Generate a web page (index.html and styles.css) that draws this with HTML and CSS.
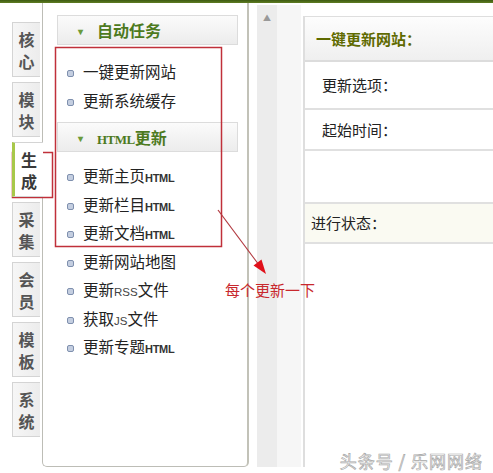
FILE: index.html
```html
<!DOCTYPE html>
<html lang="zh-CN">
<head>
    <meta charset="UTF-8">
    <meta name="viewport" content="width=device-width, initial-scale=1.0">
    <title>生成 - 一键更新网站</title>
    <link rel="stylesheet" href="styles.css">
</head>
<body>
    <div class="topbar"></div>

    <div class="frame">
        <!-- left tabs -->
        <div class="tabs">
            <div class="tab">核<br>心</div>
            <div class="tab">模<br>块</div>
            <div class="tab active">生<br>成</div>
            <div class="tab">采<br>集</div>
            <div class="tab">会<br>员</div>
            <div class="tab">模<br>板</div>
            <div class="tab">系<br>统</div>
        </div>

        <!-- menu -->
        <div class="menu">
            <div class="menu-head"><span class="caret">&#9662;</span>自动任务</div>
            <ul class="menu-list">
                <li><i class="dot"></i>一键更新网站</li>
                <li><i class="dot"></i>更新系统缓存</li>
            </ul>
            <div class="menu-head"><span class="caret">&#9662;</span><span class="en">HTML</span>更新</div>
            <ul class="menu-list second">
                <li><i class="dot"></i>更新主页<span class="en">HTML</span></li>
                <li><i class="dot"></i>更新栏目<span class="en">HTML</span></li>
                <li><i class="dot"></i>更新文档<span class="en">HTML</span></li>
                <li><i class="dot"></i>更新网站地图</li>
                <li><i class="dot"></i>更新<span class="thin">RSS</span>文件</li>
                <li><i class="dot"></i>获取<span class="thin">JS</span>文件</li>
                <li><i class="dot"></i>更新专题<span class="en">HTML</span></li>
            </ul>
        </div>

        <!-- splitter -->
        <div class="gutter">
            <div class="strip"><span class="up">&#9650;</span></div>
            <div class="strip light"></div>
        </div>

        <!-- main form -->
        <div class="main">
            <div class="main-head">一键更新网站：</div>
            <div class="row r1">更新选项：</div>
            <div class="row r2">起始时间：</div>
            <div class="row r3"></div>
            <div class="row status">进行状态：</div>
        </div>
    </div>

    <!-- notes drawn on top -->
    <svg class="marks" width="493" height="473" viewBox="0 0 493 473">
        <rect x="55.5" y="47.5" width="166" height="199" fill="none" stroke="#c0303a" stroke-width="1.5"/>
        <rect x="12.5" y="152.5" width="40" height="45" fill="none" stroke="#c0303a" stroke-width="1.5"/>
        <line x1="218" y1="210" x2="259" y2="265" stroke="#b23a40" stroke-width="1.2"/>
        <polygon points="266,274 253.5,265.5 261.5,259.5" fill="#e0101a"/>
    </svg>
    <div class="note">每个更新一下</div>

    <div class="watermark">头条号 / 乐网网络</div>
</body>
</html>
```

FILE: styles.css
```css
*{
    margin: 0;
    padding: 0;
    box-sizing: border-box;
}
body{
    background: #fff;
    font-family: "Noto Sans CJK SC", "Liberation Sans", sans-serif;
    color: #222;
    width: 493px;
    height: 473px;
    overflow: hidden;
    position: relative;
}
.topbar{
    height: 3px;
    background: linear-gradient(#3d5a12, #5f7d22);
}
.frame{
    display: flex;
    height: 464px;
}

/* tabs */
.tabs{
    width: 42px;
    padding-top: 19px;
    padding-left: 12px;
}
.tab{
    width: 28px;
    height: 55px;
    margin-bottom: 5px;
    border: 1px solid #d4d4d4;
    border-right: 0;
    background: linear-gradient(90deg, #f6f6f6, #ececec);
    color: #555;
    font-size: 16px;
    font-weight: 700;
    line-height: 22px;
    text-align: center;
    padding-top: 5px;
}
.tab.active{
    width: 31px;
    background: #fff;
    border-left: 3px solid #a8c84a;
    position: relative;
    z-index: 1;
    color: #3a3a3a;
}

/* menu */
.menu{
    width: 207px;
    height: 464px;
    border: 1px solid #bdbdb6;
    border-top: 0;
    border-right: 2px solid #c2c2b8;
    border-radius: 0 0 5px 5px;
    padding: 12px 9px 0 14px;
}
.menu-head{
    height: 30px;
    border: 1px solid #dcdcdc;
    background: linear-gradient(#fbfbfb, #ececec);
    color: #4d7a1e;
    font-size: 16px;
    font-weight: 700;
    line-height: 28px;
    padding-left: 20px;
}
.menu-head .caret{
    font-size: 10px;
    color: #6a9a3a;
    margin-right: 14px;
    vertical-align: 2px;
}
.menu-head .en{
    font-family: "Liberation Serif", serif;
    font-size: 13px;
    letter-spacing: -0.5px;
}
.menu-list{
    list-style: none;
    padding: 12px 0 8px;
}
.menu-list.second{
    padding-top: 9px;
}
.menu-list li{
    height: 28.5px;
    line-height: 28px;
    font-size: 15.5px;
    padding-left: 10px;
    white-space: nowrap;
}
.dot{
    display: inline-block;
    width: 7px;
    height: 7px;
    border-radius: 2px;
    background: #c4cee0;
    border: 1.5px solid #7f90ae;
    margin-right: 9px;
    vertical-align: 1px;
}
.menu-list .en{
    font-family: "Liberation Sans", sans-serif;
    font-weight: 700;
    font-size: 11px;
    letter-spacing: -0.3px;
    color: #333;
}
.menu-list .thin{
    font-family: "Liberation Sans", sans-serif;
    font-size: 11.5px;
    color: #444;
}

/* splitter */
.gutter{
    width: 54px;
    display: flex;
    padding-left: 8px;
    padding-top: 2px;
}
.strip{
    width: 20px;
    height: 100%;
    background: #ececec;
    text-align: center;
}
.strip.light{
    width: 24px;
    background: #f6f6f6;
}
.strip .up{
    display: block;
    font-size: 8px;
    color: #999;
    padding-top: 7px;
}

/* main form */
.main{
    flex: 1;
    margin-top: 13px;
    border-left: 2px solid #dedede;
    border-top: 1px solid #dedede;
}
.main-head{
    height: 45px;
    background: linear-gradient(#fdfdfd, #efefef);
    border-bottom: 2px solid #dcdcdc;
    color: #5f6a00;
    font-size: 15px;
    font-weight: 700;
    line-height: 43px;
    padding-left: 11px;
}
.row{
    border-bottom: 2px solid #e0e0e0;
    font-size: 15px;
    padding-left: 17px;
}
.r1{ height: 48px; line-height: 46px; }
.r2{ height: 41px; line-height: 39px; }
.r3{ height: 53px; }
.status{
    height: 40px;
    line-height: 38px;
    padding-left: 6px;
    background: #fafaf2;
}

/* notes */
.marks{
    position: absolute;
    left: 0;
    top: 0;
    pointer-events: none;
}
.note{
    position: absolute;
    left: 225px;
    top: 280px;
    font-size: 15px;
    line-height: 20px;
    color: #c8282d;
}
.watermark{
    position: absolute;
    right: 10px;
    top: 448px;
    font-size: 17px;
    letter-spacing: 1px;
    color: #fff;
    -webkit-text-stroke: 0.7px #a8a8a8;
}
```
